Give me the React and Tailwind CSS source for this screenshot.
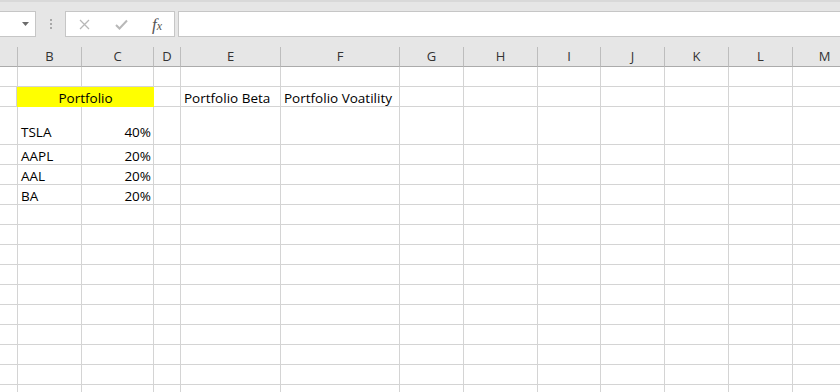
const COLS = [
  { key: 'A', w: 18, label: '' },
  { key: 'B', w: 64, label: 'B' },
  { key: 'C', w: 72, label: 'C' },
  { key: 'D', w: 27, label: 'D' },
  { key: 'E', w: 100, label: 'E' },
  { key: 'F', w: 119, label: 'F' },
  { key: 'G', w: 64, label: 'G' },
  { key: 'H', w: 74, label: 'H' },
  { key: 'I', w: 63, label: 'I' },
  { key: 'J', w: 64, label: 'J' },
  { key: 'K', w: 64, label: 'K' },
  { key: 'L', w: 64, label: 'L' },
  { key: 'M', w: 64, label: 'M' },
]

// row heights, row 3 is the tall one
const ROWS = [20, 20, 38, 20, 20, 20, 20, 20, 20, 20, 20, 20, 20, 20, 20, 20]

const DATA = {
  '2E': 'Portfolio Beta',
  '2F': 'Portfolio Voatility',
  '3B': 'TSLA', '3C': '40%',
  '4B': 'AAPL', '4C': '20%',
  '5B': 'AAL', '5C': '20%',
  '6B': 'BA', '6C': '20%',
}

const font = { fontFamily: '"Open Sans", "Noto Sans", sans-serif' }

const FormulaBar = () => (
  <div className="h-[47px] bg-[#e6e6e6] border-t-[2px] border-[#d9d9d9] flex items-start pt-[9px]">
    {/* name box */}
    <div className="w-[36px] h-[26px] bg-white border border-l-0 border-[#c6c6c6] flex items-center justify-end pr-[6px]">
      <svg width="7" height="4" viewBox="0 0 7 4"><polygon points="0,0 7,0 3.5,4" fill="#6b6b6b" /></svg>
    </div>
    <div className="w-[29px] h-[26px] flex flex-col items-center justify-center gap-[2px]">
      <span className="w-[2px] h-[2px] bg-[#a8a8a8]" />
      <span className="w-[2px] h-[2px] bg-[#a8a8a8]" />
      <span className="w-[2px] h-[2px] bg-[#a8a8a8]" />
    </div>
    {/* cancel / enter / fx */}
    <div className="w-[110px] h-[26px] bg-white border border-[#c6c6c6] flex items-center">
      <div className="w-[36px] flex justify-center">
        <svg width="11" height="11" viewBox="0 0 11 11">
          <path d="M1 1 L10 10 M10 1 L1 10" stroke="#b8b8b8" strokeWidth="1.3" fill="none" />
        </svg>
      </div>
      <div className="w-[38px] flex justify-center">
        <svg width="13" height="11" viewBox="0 0 13 11">
          <path d="M1 6 L4.5 9.5 L12 1.5" stroke="#b8b8b8" strokeWidth="2" fill="none" />
        </svg>
      </div>
      <div className="flex-1 flex justify-center">
        <span className="italic text-[#555] text-[17px] leading-none" style={{ fontFamily: '"Liberation Serif", serif' }}>
          f<span className="text-[12px]">x</span>
        </span>
      </div>
    </div>
    <div className="ml-[3px] flex-1 h-[26px] bg-white border border-r-0 border-[#c6c6c6]" />
  </div>
)

const HeaderRow = () => (
  <div className="flex h-[20px] bg-[#e6e6e6]">
    {COLS.map(c => (
      <div
        key={c.key}
        className="shrink-0 h-full border-r border-b border-r-[#bdbdbd] border-b-[#ababab] flex items-center justify-center pt-[1px] text-[13px] text-[#333]"
        style={{ width: c.w }}
      >
        {c.label}
      </div>
    ))}
  </div>
)

const Cell = ({ w, h, value, right, tall }) => (
  <div
    className={`shrink-0 border-r border-b border-[#d4d4d4] flex items-end text-[13.5px] leading-[16px] text-black whitespace-nowrap ${right ? 'justify-end pr-[2px]' : 'pl-[3px]'} ${tall ? 'pb-[4px]' : 'pb-0'}`}
    style={{ width: w, height: h }}
  >
    {value}
  </div>
)

const Grid = () => (
  <div className="bg-white">
    {ROWS.map((h, i) => {
      const r = i + 1
      if (r === 2) {
        return (
          <div key={r} className="flex">
            <Cell w={17} h={h} />
            <div
              className="shrink-0 bg-[#ffff00] flex items-end justify-center pb-[1px] text-[13.5px] leading-[16px] text-black"
              style={{ width: 137, height: h }}
            >
              Portfolio
            </div>
            {COLS.slice(3).map(c => (
              <Cell key={c.key} w={c.w} h={h} value={DATA[`${r}${c.key}`]} />
            ))}
          </div>
        )
      }
      return (
        <div key={r} className="flex">
          {COLS.map(c => (
            <Cell
              key={c.key}
              w={c.w}
              h={h}
              value={DATA[`${r}${c.key}`]}
              right={c.key === 'C'}
              tall={r === 3}
            />
          ))}
        </div>
      )
    })}
  </div>
)

export default function App() {
  return (
    <div className="w-[840px] h-[392px] overflow-hidden bg-white" style={font}>
      <FormulaBar />
      <HeaderRow />
      <Grid />
    </div>
  )
}
